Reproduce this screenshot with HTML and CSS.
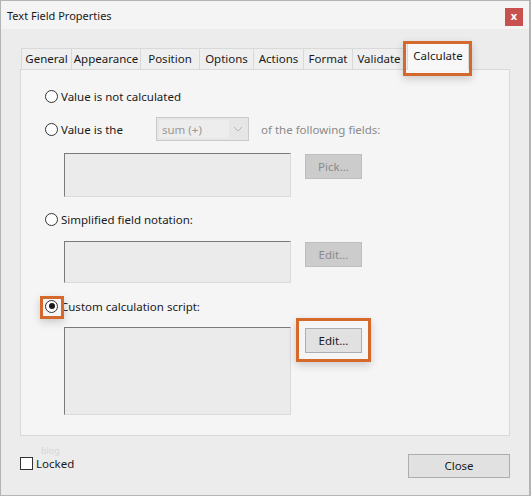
FILE: index.html
```html
<!DOCTYPE html>
<html>
<head>
<meta charset="utf-8">
<link rel="stylesheet" href="styles.css">
</head>
<body>
<div class="window">
  <div class="titlebar">
    <span class="title">Text Field Properties</span>
    <span class="close-x">x</span>
  </div>
  <div class="body">
    <div class="tabs">
      <div class="tab t-general">General</div>
      <div class="tab t-appearance">Appearance</div>
      <div class="tab t-position">Position</div>
      <div class="tab t-options">Options</div>
      <div class="tab t-actions">Actions</div>
      <div class="tab t-format">Format</div>
      <div class="tab t-validate">Validate</div>
      <div class="tab active t-calculate">Calculate<span class="hl hl-tab"></span></div>
    </div>
    <div class="panel">
      <div class="row r1"><span class="radio"></span><span class="label">Value is not calculated</span></div>
      <div class="row r2">
        <span class="radio"></span><span class="label lbl-value">Value is the</span>
        <div class="select"><span class="select-val">sum (+)</span><span class="select-arrow"><svg width="10" height="6" viewBox="0 0 10 6"><path d="M1 1 L5 5 L9 1" fill="none" stroke="#b5b5b5" stroke-width="1"/></svg></span></div>
        <span class="label dim">of the following fields:</span>
      </div>
      <div class="field-row f1"><div class="textbox tb-small"></div><div class="btn disabled">Pick...</div></div>
      <div class="row r3"><span class="radio"></span><span class="label">Simplified field notation:</span></div>
      <div class="field-row f2"><div class="textbox tb-small"></div><div class="btn disabled">Edit...</div></div>
      <div class="row r4"><span class="radio checked"><span class="hl hl-radio"></span></span><span class="label">Custom calculation script:</span></div>
      <div class="field-row f3"><div class="textbox tb-large"></div><div class="btn enabled">Edit...<span class="hl hl-btn"></span></div></div>
    </div>
    <div class="footer">
      <div class="lock">
        <span class="ghost">blog</span>
        <div class="lock-row"><span class="checkbox"></span><span class="label">Locked</span></div>
      </div>
      <div class="btn close-btn">Close</div>
    </div>
  </div>
</div>
</body>
</html>
```

FILE: styles.css
```css
* { box-sizing: border-box; }
html, body { margin: 0; padding: 0; }
body {
  width: 531px;
  height: 496px;
  overflow: hidden;
  font-family: "Noto Sans", "Open Sans", sans-serif;
  font-size: 11.5px;
  color: #1a1a1a;
  background: #ffffff;
}
.window {
  width: 531px;
  height: 496px;
  border: 1px solid #b4b4b4;
  border-right-width: 2px;
  background: #ececec;
  display: flex;
  flex-direction: column;
}
.titlebar {
  height: 28px;
  background: #f4f4f4;
  display: flex;
  align-items: center;
  justify-content: space-between;
  padding-left: 6px;
  padding-right: 7px;
  flex-shrink: 0;
}
.title { font-size: 11px; color: #1a1a1a; }
.close-x {
  width: 18px;
  height: 18px;
  background: #c8504f;
  color: #fff;
  font-size: 11px;
  font-weight: bold;
  display: flex;
  align-items: center;
  justify-content: center;
  line-height: 1;
  padding-bottom: 2px;
  margin-top: 3px;
  margin-right: -1px;
}
.body {
  flex: 1;
  padding: 0 19px 0 18px;
  display: flex;
  flex-direction: column;
}
.tabs {
  display: flex;
  margin-top: 19px;
  padding-left: 2px;
  height: 21px;
  position: relative;
  z-index: 2;
}
.tab {
  height: 21px;
  border: 1px solid #d9d9d9;
  border-right: none;
  border-bottom: none;
  background: #efefef;
  display: flex;
  align-items: center;
  justify-content: center;
  color: #1a1a1a;
  font-size: 11.5px;
  padding-bottom: 1px;
}
.t-general { width: 50px; }
.t-appearance { width: 69px; }
.t-position { width: 59px; }
.t-options { width: 54px; }
.t-actions { width: 50px; }
.t-format { width: 49px; }
.t-validate { width: 54px; border-right: 1px solid #d9d9d9; }
.tab.active {
  width: 62px;
  height: 27px;
  margin-top: -5px;
  margin-left: 1px;
  border: 1px solid #d9d9d9;
  border-bottom: none;
  background: #f7f7f7;
  position: relative;
  align-items: flex-start;
  padding-top: 4px;
}
.hl {
  position: absolute;
  border: 3px solid #d5692c;
  box-shadow: 0 3px 8px rgba(0,0,0,0.18);
  pointer-events: none;
}
.hl-tab { left: -5px; top: -3px; width: 69px; height: 35px; }
.panel {
  height: 367px;
  width: 490px;
  margin-left: 1px;
  background: #f5f5f5;
  border: 1px solid #d9d9d9;
  padding-left: 24px;
  display: flex;
  flex-direction: column;
  position: relative;
  z-index: 1;
}
.row {
  display: flex;
  align-items: center;
  height: 20px;
}
.r1 { margin-top: 16px; }
.r2 { margin-top: 11px; height: 24px; }
.r3 { margin-top: 12px; }
.r4 { margin-top: 13px; }
.radio {
  width: 13px;
  height: 13px;
  border: 1px solid #333;
  border-radius: 50%;
  background: #fff;
  margin-right: 3px;
  flex-shrink: 0;
  position: relative;
}
.radio.checked::after {
  content: "";
  position: absolute;
  left: 2.5px; top: 2.5px;
  width: 6px; height: 6px;
  border-radius: 50%;
  background: #1a1a1a;
}
.hl-radio { left: -6px; top: -5px; width: 24px; height: 23px; }
.label { white-space: nowrap; }
.lbl-value { width: 95px; }
.dim { color: #8a8a8a; margin-left: 12px; }
.select {
  width: 93px;
  height: 24px;
  background: #e6e6e6;
  border: 1px solid #cacaca;
  display: flex;
  padding: 2px;
}
.select-val {
  width: 70px;
  background: #ededed;
  color: #979797;
  padding-left: 3px;
  display: flex;
  align-items: center;
}
.select-arrow {
  flex: 1;
  display: flex;
  align-items: center;
  justify-content: center;
}
.field-row {
  display: flex;
  align-items: flex-start;
  margin-left: 19px;
  gap: 14px;
}
.f1 { margin-top: 12px; }
.f2 { margin-top: 12px; }
.f3 { margin-top: 11px; }
.textbox {
  width: 227px;
  background: #ebebeb;
  border-top: 1px solid #7a7a7a;
  border-left: 1px solid #7a7a7a;
  border-right: 1px solid #dadada;
  border-bottom: 1px solid #dadada;
}
.tb-small { height: 44px; }
.f2 .tb-small { height: 42px; }
.tb-large { height: 88px; }
.btn {
  width: 57px;
  height: 25px;
  margin-top: 1px;
  display: flex;
  align-items: center;
  justify-content: center;
  position: relative;
  padding-bottom: 1px;
}
.btn.disabled {
  background: #cccccc;
  border: 1px solid #bebebe;
  color: #8a8a8a;
}
.btn.enabled {
  background: #e1e1e1;
  border: 1px solid #adadad;
  color: #1a1a1a;
}
.hl-btn { left: -10px; top: -11px; width: 75px; height: 44px; }
.footer {
  display: flex;
  justify-content: space-between;
  align-items: flex-start;
  margin-top: 9px;
}
.lock { display: flex; flex-direction: column; margin-left: 1px; }
.ghost {
  color: #d6d6d6;
  font-size: 9px;
  margin-left: 21px;
  height: 11px;
  line-height: 11px;
}
.lock-row { display: flex; align-items: center; height: 14px; }
.checkbox {
  width: 13px;
  height: 13px;
  border: 1px solid #333;
  background: #fff;
  margin-right: 3px;
}
.close-btn {
  width: 102px;
  height: 24px;
  margin-top: 9px;
  margin-right: 0;
  background: #e1e1e1;
  border: 1px solid #adadad;
}
```
